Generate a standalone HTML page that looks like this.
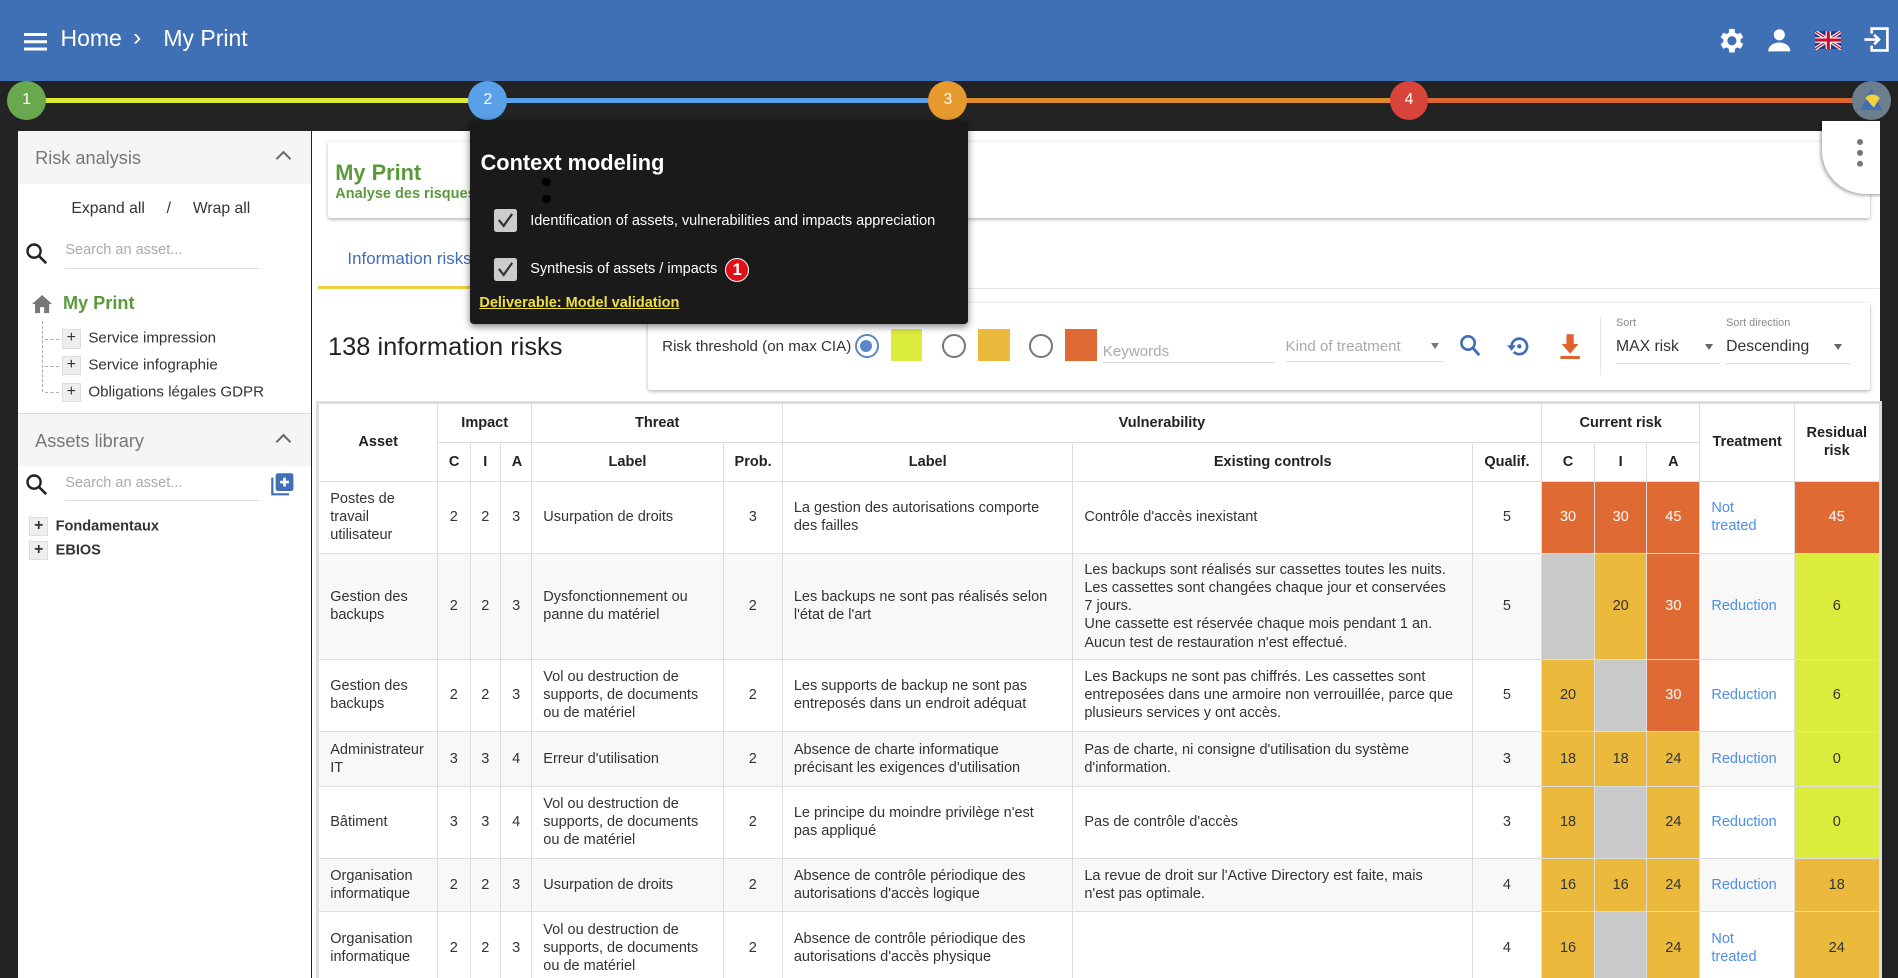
<!DOCTYPE html>
<html><head><meta charset="utf-8"><style>
*{box-sizing:border-box;margin:0;padding:0}
html,body{width:1898px;height:978px;overflow:hidden;background:#232323;font-family:"Liberation Sans",Arial,sans-serif}
#r{position:absolute;left:0;top:0;width:1568px;height:808px;zoom:1.2105;overflow:hidden;background:#232323}
.a{position:absolute}
.hdr{left:0;top:0;width:1568px;height:67px;background:#3f6fb5;color:#fff}
.hdr .t{position:absolute;top:21px;font-size:19px}
.seg{position:absolute;top:81px;height:4px}
.cir{position:absolute;top:67px;width:32px;height:32px;border-radius:50%;color:#fff;font-size:13px;text-align:center;line-height:32px}
.left{left:15px;top:108px;width:242px;height:700px;background:#fff}
.sec{background:#f5f5f5;height:44px;color:#777;font-size:15px;padding:14px 0 0 14px;position:relative}
.chev{position:absolute;right:18px;top:18px;width:9px;height:9px;border-left:2px solid #666;border-top:2px solid #666;transform:rotate(45deg)}
.pl{display:inline-block;width:16px;height:16px;background:#eee;border:1px solid #ddd;text-align:center;line-height:14px;font-size:13px;color:#333;vertical-align:middle;margin-right:6px}
.main{left:258px;top:108px;width:1295px;height:700px;background:#fff}
table{border-collapse:collapse;position:absolute;left:263px;top:333px;width:1289px;font-size:12px;color:#333;table-layout:fixed;outline:2px solid #ddd}
td,th{border:1px solid #ddd;padding:0 9px;vertical-align:middle;line-height:15px}
td:nth-child(7),td:nth-child(8){padding-right:13px}
th{font-weight:bold;text-align:center;height:32px;color:#222;font-size:12px}
td.c{text-align:center;padding:0 3px}
tr.g td{background:#f8f8f8}
td.o{background:#df6a33!important;color:#fff;text-align:center}
td.y{background:#ebb93b!important;text-align:center}
td.l{background:#dcec3c!important;text-align:center}
td.x{background:#c9c9c9!important}
td.b{color:#4d8fe6}
.sq{position:absolute;top:272px;width:26px;height:26px}
.rad{position:absolute;top:276px;width:20px;height:20px;border-radius:50%;border:2px solid #777}
.h{position:absolute;left:-14px;top:8px;width:12px;border-top:1px dashed #aaa}
</style></head><body><div id="r">
<div class="a hdr">
 <div class="a" style="left:20px;top:27px;width:19px;height:3px;background:#fff;box-shadow:0 6px 0 #fff,0 12px 0 #fff"></div>
 <div class="t" style="left:50px">Home</div>
 <div class="t" style="left:110px;font-size:20px;top:20px">›</div>
 <div class="t" style="left:135px">My Print</div>
 <svg class="a" style="left:1417px;top:21px" width="26" height="26" viewBox="0 0 24 24"><path fill="#fff" d="M19.4 13a7.5 7.5 0 0 0 0-2l2.1-1.6-2-3.5-2.5 1a7 7 0 0 0-1.7-1L14.9 3h-4l-.4 2.9a7 7 0 0 0-1.7 1l-2.5-1-2 3.5L6.4 11a7.5 7.5 0 0 0 0 2l-2.1 1.6 2 3.5 2.5-1a7 7 0 0 0 1.7 1l.4 2.9h4l.4-2.9a7 7 0 0 0 1.7-1l2.5 1 2-3.5zM12.9 15.5a3.5 3.5 0 1 1 0-7 3.5 3.5 0 0 1 0 7z"/></svg>
 <svg class="a" style="left:1459px;top:22px" width="22" height="22" viewBox="0 0 24 24"><circle cx="12" cy="7" r="5" fill="#fff"/><path fill="#fff" d="M2 22c0-5 5-8 10-8s10 3 10 8z"/></svg>
 <svg class="a" style="left:1499px;top:26px" width="22" height="15" viewBox="0 0 60 40"><rect width="60" height="40" fill="#1e3c8c"/><path d="M0 0L60 40M60 0L0 40" stroke="#fff" stroke-width="8"/><path d="M0 0L60 40M60 0L0 40" stroke="#c8102e" stroke-width="3"/><path d="M30 0V40M0 20H60" stroke="#fff" stroke-width="12"/><path d="M30 0V40M0 20H60" stroke="#c8102e" stroke-width="7"/></svg>
 <svg class="a" style="left:1538px;top:21px" width="24" height="24" viewBox="0 0 24 24"><path fill="none" stroke="#fff" stroke-width="2.2" d="M8 7V3h13v18H8v-4M2 12h12M10 8l4 4-4 4"/></svg>
</div>
<div class="seg" style="left:22px;width:381px;background:#dde83a"></div>
<div class="seg" style="left:403px;width:380px;background:#5aa0e8"></div>
<div class="seg" style="left:783px;width:381px;background:#e08a2e"></div>
<div class="seg" style="left:1164px;width:382px;background:#dc6530"></div>
<div class="cir" style="left:6px;background:#6aa84f">1</div>
<div class="cir" style="left:387px;background:#5aa0e8">2</div>
<div class="cir" style="left:767px;background:#e69a2e">3</div>
<div class="cir" style="left:1148px;background:#d9443a">4</div>
<div class="cir" style="left:1530px;background:#6b7f8f"><svg width="32" height="32" viewBox="0 0 32 32"><path d="M16 6L7 24h18z" fill="#3f6fb5"/><path d="M11 14q6-6 12 0l-5 8z" fill="#f2d23a"/></svg></div>

<div class="a left">
 <div class="sec">Risk analysis<div class="chev"></div></div>
 <div style="font-size:13px;color:#333;padding:13px 0 0 44px;height:40px">Expand all &nbsp; &nbsp; / &nbsp; &nbsp; Wrap all</div>
 <svg class="a" style="left:6px;top:92px" width="20" height="20" viewBox="0 0 24 24"><circle cx="9" cy="9" r="6.5" fill="none" stroke="#222" stroke-width="2.4"/><path d="M14 14l7 7" stroke="#222" stroke-width="2.6"/></svg>
 <div class="a" style="left:39px;top:92px;width:160px;height:22px;border-bottom:1px solid #ddd;font-size:12px;color:#aaa">Search an asset...</div>
 <svg class="a" style="left:10px;top:133px" width="20" height="20" viewBox="0 0 24 24"><path fill="#777" d="M12 3L2 12h3v9h5v-6h4v6h5v-9h3z"/></svg>
 <div class="a" style="left:37px;top:134px;font-size:15px;font-weight:bold;color:#5b9a3c">My Print</div>
 <div class="a" style="left:20px;top:157px;height:59px;border-left:1px dashed #aaa"></div>
 <div class="a" style="left:36px;top:164px;font-size:12.5px;color:#333"><div class="h"></div><span class="pl">+</span>Service impression</div>
 <div class="a" style="left:36px;top:186px;font-size:12.5px;color:#333"><div class="h"></div><span class="pl">+</span>Service infographie</div>
 <div class="a" style="left:36px;top:208px;font-size:12.5px;color:#333"><div class="h"></div><span class="pl">+</span>Obligations légales GDPR</div>
 <div class="a" style="left:0;top:233px;width:242px"><div class="sec" style="border-top:1px solid #ddd">Assets library<div class="chev"></div></div></div>
 <svg class="a" style="left:6px;top:283px" width="20" height="20" viewBox="0 0 24 24"><circle cx="9" cy="9" r="6.5" fill="none" stroke="#222" stroke-width="2.4"/><path d="M14 14l7 7" stroke="#222" stroke-width="2.6"/></svg>
 <div class="a" style="left:39px;top:284px;width:160px;height:22px;border-bottom:1px solid #ddd;font-size:12px;color:#aaa">Search an asset...</div>
 <svg class="a" style="left:207px;top:281px" width="22" height="22" viewBox="0 0 24 24"><path fill="#3f6fb5" d="M2 6v16h16v-2H4V6z"/><rect x="6" y="2" width="16" height="16" rx="2" fill="#3f6fb5"/><path d="M14 6v8M10 10h8" stroke="#fff" stroke-width="2.4"/></svg>
 <div class="a" style="left:9px;top:319px;font-size:12px;font-weight:bold;color:#333"><span class="pl">+</span>Fondamentaux</div>
 <div class="a" style="left:9px;top:339px;font-size:12px;font-weight:bold;color:#333"><span class="pl">+</span>EBIOS</div>
</div>

<div class="a main"></div>
<div class="a" style="left:271px;top:117px;width:1274px;height:63px;background:#fff;box-shadow:0 1px 3px rgba(0,0,0,.3);border-radius:2px"></div>
<div class="a" style="left:277px;top:132px;font-size:18px;font-weight:bold;color:#5b9a3c">My Print</div>
<div class="a" style="left:277px;top:154px;font-size:12px;font-weight:bold;color:#5b9a3c">Analyse des risques</div>
<div class="a" style="left:1505px;top:100px;width:56px;height:60px;background:#fff;border-radius:0 0 0 36px;box-shadow:-1px 1px 3px rgba(0,0,0,.35)"></div>
<div class="a" style="left:1534px;top:115px;width:5px;height:5px;border-radius:50%;background:#777;box-shadow:0 9px 0 #777,0 18px 0 #777"></div>
<div class="a" style="left:1553px;top:100px;width:15px;height:708px;background:#232323"></div>

<div class="a" style="left:287px;top:206px;font-size:14px;color:#3f6fb5">Information risks</div>
<div class="a" style="left:410px;top:206px;font-size:14px;color:#999">Operational risks</div>
<div class="a" style="left:263px;top:238px;width:1289px;height:1px;background:#e5e5e5"></div>
<div class="a" style="left:263px;top:236px;width:127px;height:3px;background:#f0d040"></div>
<div class="a" style="left:271px;top:275px;font-size:21px;color:#222">138 information risks</div>

<div class="a" style="left:535px;top:250px;width:1010px;height:72px;background:#fff;box-shadow:0 1px 3px rgba(0,0,0,.3);border-radius:2px"></div>
<div class="a" style="left:547px;top:279px;font-size:12.5px;color:#333">Risk threshold (on max CIA)</div>
<div class="a" style="left:706px;top:276px;width:20px;height:20px;border-radius:50%;border:2px solid #5b86c8"><div style="margin:3px;width:10px;height:10px;border-radius:50%;background:#5b86c8"></div></div>
<div class="sq" style="left:736px;background:#dcec3c"></div>
<div class="rad" style="left:778px"></div>
<div class="sq" style="left:808px;background:#ebb93b"></div>
<div class="rad" style="left:850px"></div>
<div class="sq" style="left:880px;background:#df6a33"></div>
<div class="a" style="left:911px;top:283px;width:142px;height:17px;border-bottom:1px solid #ddd;font-size:12.5px;color:#aaa">Keywords</div>
<div class="a" style="left:1062px;top:279px;width:131px;height:20px;border-bottom:1px solid #ddd;font-size:12.5px;color:#aaa">Kind of treatment<span style="position:absolute;right:4px;top:4px;border:4px solid transparent;border-top:5px solid #777"></span></div>
<svg class="a" style="left:1204px;top:275px" width="22" height="22" viewBox="0 0 24 24"><circle cx="10" cy="9" r="6" fill="none" stroke="#3f6fb5" stroke-width="2.4"/><path d="M14 13l6 7" stroke="#3f6fb5" stroke-width="2.6"/></svg>
<svg class="a" style="left:1244px;top:275px" width="22" height="22" viewBox="0 0 24 24"><path d="M5 12a7 7 0 1 1 2 5" fill="none" stroke="#3f6fb5" stroke-width="2.4"/><path d="M1 11h8l-4 5z" fill="#3f6fb5"/><circle cx="12" cy="12" r="2" fill="#3f6fb5"/></svg>
<svg class="a" style="left:1287px;top:275px" width="20" height="22" viewBox="0 0 20 22"><path d="M7 1h6v8h4l-7 8-7-8h4z" fill="#e0602e"/><rect x="2" y="19" width="16" height="2.5" fill="#e0602e"/></svg>
<div class="a" style="left:1322px;top:262px;width:1px;height:48px;background:#e5e5e5"></div>
<div class="a" style="left:1335px;top:262px;font-size:9px;color:#888">Sort</div>
<div class="a" style="left:1335px;top:279px;width:86px;height:22px;border-bottom:1px solid #ddd;font-size:13px;color:#333">MAX risk<span style="position:absolute;right:6px;top:5px;border:4px solid transparent;border-top:5px solid #666"></span></div>
<div class="a" style="left:1426px;top:262px;font-size:9px;color:#888">Sort direction</div>
<div class="a" style="left:1426px;top:279px;width:102px;height:22px;border-bottom:1px solid #ddd;font-size:13px;color:#333">Descending<span style="position:absolute;right:6px;top:5px;border:4px solid transparent;border-top:5px solid #666"></span></div>

<table>
<colgroup><col style="width:98px"><col style="width:27px"><col style="width:25px"><col style="width:26px"><col style="width:158px"><col style="width:49px"><col style="width:240px"><col style="width:330px"><col style="width:57px"><col style="width:44px"><col style="width:43px"><col style="width:44px"><col style="width:78px"><col style="width:70px"></colgroup>
<tr><th rowspan="2">Asset</th><th colspan="3">Impact</th><th colspan="2">Threat</th><th colspan="3">Vulnerability</th><th colspan="3">Current risk</th><th rowspan="2">Treatment</th><th rowspan="2">Residual<br>risk</th></tr>
<tr><th>C</th><th>I</th><th>A</th><th>Label</th><th>Prob.</th><th>Label</th><th>Existing controls</th><th>Qualif.</th><th>C</th><th>I</th><th>A</th></tr>
<tr style="height:60px"><td>Postes de travail utilisateur</td><td class="c">2</td><td class="c">2</td><td class="c">3</td><td>Usurpation de droits</td><td class="c">3</td><td>La gestion des autorisations comporte des failles</td><td>Contrôle d'accès inexistant</td><td class="c">5</td><td class="o">30</td><td class="o">30</td><td class="o">45</td><td class="b">Not<br>treated</td><td class="o">45</td></tr>
<tr class="g" style="height:87px"><td>Gestion des backups</td><td class="c">2</td><td class="c">2</td><td class="c">3</td><td>Dysfonctionnement ou panne du matériel</td><td class="c">2</td><td>Les backups ne sont pas réalisés selon l'état de l'art</td><td>Les backups sont réalisés sur cassettes toutes les nuits. Les cassettes sont changées chaque jour et conservées 7 jours.<br>Une cassette est réservée chaque mois pendant 1 an.<br>Aucun test de restauration n'est effectué.</td><td class="c">5</td><td class="x"></td><td class="y">20</td><td class="o">30</td><td class="b">Reduction</td><td class="l">6</td></tr>
<tr style="height:60px"><td>Gestion des backups</td><td class="c">2</td><td class="c">2</td><td class="c">3</td><td>Vol ou destruction de supports, de documents ou de matériel</td><td class="c">2</td><td>Les supports de backup ne sont pas entreposés dans un endroit adéquat</td><td>Les Backups ne sont pas chiffrés. Les cassettes sont entreposées dans une armoire non verrouillée, parce que plusieurs services y ont accès.</td><td class="c">5</td><td class="y">20</td><td class="x"></td><td class="o">30</td><td class="b">Reduction</td><td class="l">6</td></tr>
<tr class="g" style="height:45px"><td>Administrateur IT</td><td class="c">3</td><td class="c">3</td><td class="c">4</td><td>Erreur d'utilisation</td><td class="c">2</td><td>Absence de charte informatique précisant les exigences d'utilisation</td><td>Pas de charte, ni consigne d'utilisation du système d'information.</td><td class="c">3</td><td class="y">18</td><td class="y">18</td><td class="y">24</td><td class="b">Reduction</td><td class="l">0</td></tr>
<tr style="height:60px"><td>Bâtiment</td><td class="c">3</td><td class="c">3</td><td class="c">4</td><td>Vol ou destruction de supports, de documents ou de matériel</td><td class="c">2</td><td>Le principe du moindre privilège n'est pas appliqué</td><td>Pas de contrôle d'accès</td><td class="c">3</td><td class="y">18</td><td class="x"></td><td class="y">24</td><td class="b">Reduction</td><td class="l">0</td></tr>
<tr class="g" style="height:44px"><td>Organisation informatique</td><td class="c">2</td><td class="c">2</td><td class="c">3</td><td>Usurpation de droits</td><td class="c">2</td><td>Absence de contrôle périodique des autorisations d'accès logique</td><td>La revue de droit sur l'Active Directory est faite, mais n'est pas optimale.</td><td class="c">4</td><td class="y">16</td><td class="y">16</td><td class="y">24</td><td class="b">Reduction</td><td class="y">18</td></tr>
<tr style="height:60px"><td>Organisation informatique</td><td class="c">2</td><td class="c">2</td><td class="c">3</td><td>Vol ou destruction de supports, de documents ou de matériel</td><td class="c">2</td><td>Absence de contrôle périodique des autorisations d'accès physique</td><td></td><td class="c">4</td><td class="y">16</td><td class="x"></td><td class="y">24</td><td class="b">Not<br>treated</td><td class="y">24</td></tr>
</table>

<div class="a" style="left:388px;top:100px;width:412px;height:168px;background:#1a1a1a;border-radius:3px;box-shadow:0 2px 6px rgba(0,0,0,.5)">
 <div class="a" style="left:9px;top:24px;font-size:18px;font-weight:bold;color:#fff">Context modeling</div>
 <div class="a" style="left:60px;top:47px;width:7px;height:7px;border-radius:50%;background:#000;box-shadow:0 14px 0 #000"></div>
 <div class="a" style="left:20px;top:73px;width:19px;height:19px;background:#ccc;border-radius:2px"><svg width="19" height="19" viewBox="0 0 19 19"><path d="M4 9l4 5 7-10" fill="none" stroke="#333" stroke-width="1.8"/></svg></div>
 <div class="a" style="left:50px;top:76px;font-size:12px;color:#fff">Identification of assets, vulnerabilities and impacts appreciation</div>
 <div class="a" style="left:20px;top:113px;width:19px;height:19px;background:#ccc;border-radius:2px"><svg width="19" height="19" viewBox="0 0 19 19"><path d="M4 9l4 5 7-10" fill="none" stroke="#333" stroke-width="1.8"/></svg></div>
 <div class="a" style="left:50px;top:116px;font-size:12px;color:#fff">Synthesis of assets / impacts</div>
 <div class="a" style="left:211px;top:113px;width:20px;height:20px;border-radius:50%;background:#e0101a;border:1px solid #fff;color:#fff;font-weight:bold;font-size:14px;text-align:center;line-height:18px">1</div>
 <div class="a" style="left:8px;top:144px;font-size:12px;font-weight:bold;color:#f0e040;text-decoration:underline">Deliverable: Model validation</div>
</div>
</div></body></html>
